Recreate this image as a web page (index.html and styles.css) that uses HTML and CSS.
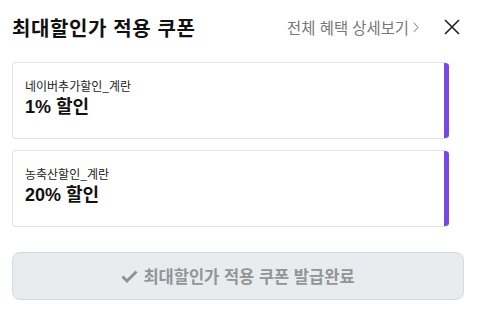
FILE: index.html
```html
<!DOCTYPE html>
<html lang="ko">
<head>
<meta charset="utf-8">
<link rel="stylesheet" href="styles.css">
</head>
<body>
<div class="sheet">
  <header class="head">
    <h1 class="title">최대할인가 적용 쿠폰</h1>
    <a class="more">전체 혜택 상세보기 <svg class="chev" width="6" height="11" viewBox="0 0 6 11"><path d="M0.8 0.8 L5 5.5 L0.8 10.2" fill="none" stroke="#999" stroke-width="1.1"/></svg></a>
    <svg class="close" width="16" height="16" viewBox="0 0 16 16"><path d="M1 1 L15 15 M15 1 L1 15" stroke="#222" stroke-width="1.6" fill="none"/></svg>
  </header>
  <div class="list">
    <div class="coupon">
      <div class="c-body">
        <div class="c-name">네이버추가할인_계란</div>
        <div class="c-rate">1% 할인</div>
      </div>
      <div class="c-bar"></div>
    </div>
    <div class="coupon">
      <div class="c-body">
        <div class="c-name">농축산할인_계란</div>
        <div class="c-rate">20% 할인</div>
      </div>
      <div class="c-bar"></div>
    </div>
  </div>
  <button class="done"><svg class="check" width="17" height="13" viewBox="0 0 17 13"><path d="M1.5 6.5 L6 11 L15.5 1.5" fill="none" stroke="#8e9094" stroke-width="2.8"/></svg>최대할인가 적용 쿠폰 발급완료</button>
</div>
</body>
</html>
```
FILE: styles.css
```css
* { box-sizing: border-box; }
html, body { margin: 0; background: #fff; }
body { font-family: "Liberation Sans", "Noto Sans CJK KR", sans-serif; color: #111; }
.sheet { width: 482px; padding: 0 22px 0 12px; }
.head { display: flex; align-items: center; height: 62px; padding-bottom: 8px; }
.title { margin: 0; font-size: 20px; font-weight: 700; flex: 1; letter-spacing: 0.6px; color: #111; font-family: "Noto Sans CJK KR", sans-serif; }
.more { font-size: 15.4px; color: #777; display: flex; align-items: center; gap: 4px; margin-right: 25px; font-family: "Noto Sans CJK KR", sans-serif; }
.chev { margin-top: 1px; }
.close { display: block; }
.list { display: flex; flex-direction: column; gap: 11px; width: 437px; }
.coupon { display: flex; height: 77px; border: 1px solid #e3e3e6; border-right: none; border-radius: 4px; overflow: hidden; }
.c-body { flex: 1; padding: 14px 0 0 12px; }
.c-name { font-size: 12px; color: #222; line-height: 18px; font-family: "Noto Sans CJK KR", sans-serif; }
.c-rate { font-size: 18px; font-weight: 700; line-height: 24px; color: #111; }
.c-bar { width: 5px; background: #7548ea; }
.done { margin-top: 25px; width: 452px; height: 48px; border: 1px solid #d6dae0; border-radius: 8px; background: #e9ecef; color: #929496; font-family: "Noto Sans CJK KR", sans-serif; font-size: 16.5px; font-weight: 700; display: flex; align-items: center; justify-content: center; gap: 5px; padding: 0; }
.check { margin-top: 1px; }
```
